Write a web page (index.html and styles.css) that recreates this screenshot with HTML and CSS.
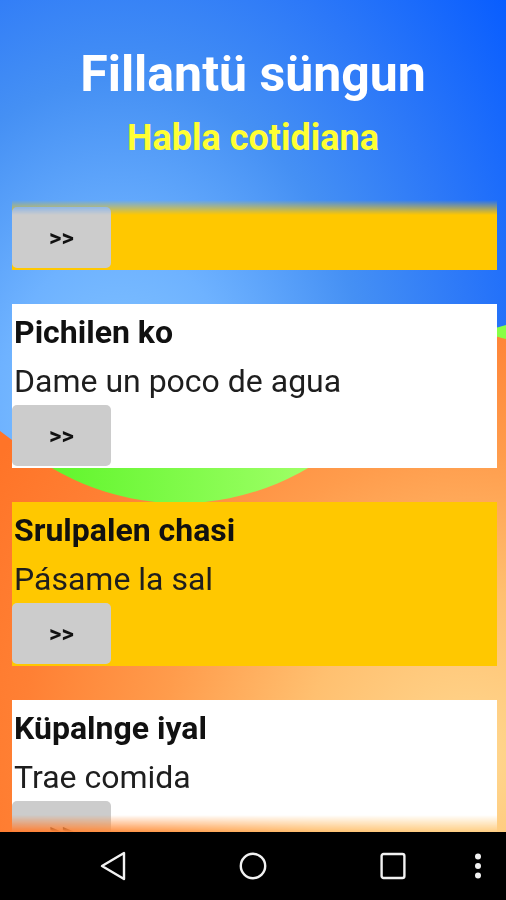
FILE: index.html
```html
<!DOCTYPE html>
<html lang="es">
<head>
<meta charset="utf-8">
<title>Fillantü süngun</title>
<link rel="stylesheet" href="styles.css">
</head>
<body>
<div class="screen">
  <div class="stage">
    <svg class="backdrop" viewBox="0 0 506 832" width="506" height="832" aria-hidden="true">
      <defs>
        <radialGradient id="ground" gradientUnits="userSpaceOnUse" cx="0" cy="0" r="1" gradientTransform="translate(470 760) scale(560 560)">
          <stop offset="0" stop-color="#ffd890"/>
          <stop offset="0.3" stop-color="#ffc070"/>
          <stop offset="0.55" stop-color="#ff9c4c"/>
          <stop offset="0.8" stop-color="#ff8034"/>
          <stop offset="1" stop-color="#ff7428"/>
        </radialGradient>
        <linearGradient id="hill" gradientUnits="userSpaceOnUse" x1="40" y1="0" x2="300" y2="0">
          <stop offset="0" stop-color="#5ef52a"/>
          <stop offset="1" stop-color="#9cff64"/>
        </linearGradient>
        <radialGradient id="sky" gradientUnits="userSpaceOnUse" cx="0" cy="0" r="1" gradientTransform="translate(120 420) scale(500 680)">
          <stop offset="0" stop-color="#88c8ff"/>
          <stop offset="0.25" stop-color="#6eb2ff"/>
          <stop offset="0.5" stop-color="#4590f4"/>
          <stop offset="0.72" stop-color="#2c78f8"/>
          <stop offset="1" stop-color="#075cff"/>
        </radialGradient>
      </defs>
      <rect width="506" height="832" fill="url(#ground)"/>
      <circle cx="180" cy="250" r="253" fill="url(#hill)"/>
      <ellipse cx="530" cy="331" rx="40" ry="10" fill="#88ff46"/>
      <path d="M0 0 H506 V325 L60 452 L12 440 L0 431 Z" fill="url(#sky)"/>
    </svg>
    <div class="content">
      <header class="header">
        <h1 class="app-title">Fillantü süngun</h1>
        <p class="app-subtitle">Habla cotidiana</p>
      </header>
      <div class="list">
        <div class="list-track">
          <article class="card card-yellow">
            <h2 class="card-title">Küpape</h2>
            <p class="card-text">Ven aquí por favor</p>
            <button class="card-button" type="button">&gt;&gt;</button>
          </article>
          <article class="card card-white">
            <h2 class="card-title">Pichilen ko</h2>
            <p class="card-text">Dame un poco de agua</p>
            <button class="card-button" type="button">&gt;&gt;</button>
          </article>
          <article class="card card-yellow">
            <h2 class="card-title">Srulpalen chasi</h2>
            <p class="card-text">Pásame la sal</p>
            <button class="card-button" type="button">&gt;&gt;</button>
          </article>
          <article class="card card-white">
            <h2 class="card-title">Küpalnge iyal</h2>
            <p class="card-text">Trae comida</p>
            <button class="card-button" type="button">&gt;&gt;</button>
          </article>
        </div>
      </div>
    </div>
  </div>
  <nav class="navbar">
    <span class="nav-btn">
      <svg width="26" height="30" viewBox="0 0 26 30"><path d="M24 2 V28 L2 15 Z" fill="none" stroke="#f2f2f2" stroke-width="2.4" stroke-linejoin="round"/></svg>
    </span>
    <span class="nav-btn">
      <svg width="30" height="30" viewBox="0 0 30 30"><circle cx="15" cy="15" r="12.2" fill="none" stroke="#f2f2f2" stroke-width="2.4"/></svg>
    </span>
    <span class="nav-btn">
      <svg width="30" height="30" viewBox="0 0 30 30"><rect x="3.6" y="3" width="22.8" height="24" rx="2" fill="none" stroke="#f2f2f2" stroke-width="2.4"/></svg>
    </span>
    <span class="nav-more">
      <svg width="10" height="30" viewBox="0 0 10 30"><circle cx="5" cy="5.5" r="3" fill="#f2f2f2"/><circle cx="5" cy="15" r="3" fill="#f2f2f2"/><circle cx="5" cy="24.5" r="3" fill="#f2f2f2"/></svg>
    </span>
  </nav>
</div>
</body>
</html>
```

FILE: styles.css
```css
html, body {
  margin: 0;
  padding: 0;
}

body {
  width: 506px;
  height: 900px;
  overflow: hidden;
  background: #000;
  font-family: Roboto, "Noto Sans", sans-serif;
}

.screen {
  display: flex;
  flex-direction: column;
  height: 900px;
}

.stage {
  display: grid;
  height: 832px;
  overflow: hidden;
  flex: none;
}

.backdrop,
.content {
  grid-area: 1 / 1;
}

.backdrop {
  display: block;
  width: 506px;
  height: 832px;
}

.content {
  display: flex;
  flex-direction: column;
  height: 832px;
  min-height: 0;
}

.header {
  flex: none;
  height: 200px;
  box-sizing: border-box;
  padding-top: 44px;
  text-align: center;
}

.app-title {
  margin: 0;
  font-size: 50px;
  line-height: 60px;
  font-weight: 700;
  color: #ffffff;
}

.app-subtitle {
  margin: 14px 0 0;
  font-size: 36px;
  line-height: 40px;
  font-weight: 700;
  color: #ffff33;
}

.list {
  flex: 1;
  min-height: 0;
  overflow: hidden;
  padding: 0 9px 0 12px;
  -webkit-mask-image: linear-gradient(to bottom, transparent 0, #000 15px, #000 calc(100% - 17px), transparent 100%);
  mask-image: linear-gradient(to bottom, transparent 0, #000 15px, #000 calc(100% - 17px), transparent 100%);
}

.list-track {
  display: flex;
  flex-direction: column;
  gap: 34px;
  margin-top: -94px;
}

.card {
  flex: none;
  height: 164px;
  box-sizing: border-box;
  padding: 3px 0 0 2px;
  display: flex;
  flex-direction: column;
  align-items: flex-start;
}

.card-white {
  background: #ffffff;
}

.card-yellow {
  background: #ffc800;
}

.card-title {
  margin: 0;
  font-size: 32px;
  line-height: 50px;
  font-weight: 700;
  color: #111111;
}

.card-text {
  margin: 0;
  font-size: 32px;
  line-height: 48px;
  font-weight: 400;
  color: #1e1e1e;
}

.card-button {
  width: 99px;
  height: 61px;
  margin-left: -2px;
  padding: 0;
  border: 0;
  border-radius: 5px;
  background: #cccccc;
  color: #111111;
  font-family: Roboto, "Noto Sans", sans-serif;
  font-size: 24px;
  font-weight: 700;
  line-height: 1;
}

.navbar {
  flex: none;
  height: 68px;
  background: #000;
  display: flex;
  align-items: center;
  padding-left: 43px;
}

.nav-btn {
  width: 140px;
  display: flex;
  justify-content: center;
  align-items: center;
}

.nav-more {
  width: 30px;
  display: flex;
  justify-content: center;
  align-items: center;
}

.nav-btn svg,
.nav-more svg {
  display: block;
}
```
